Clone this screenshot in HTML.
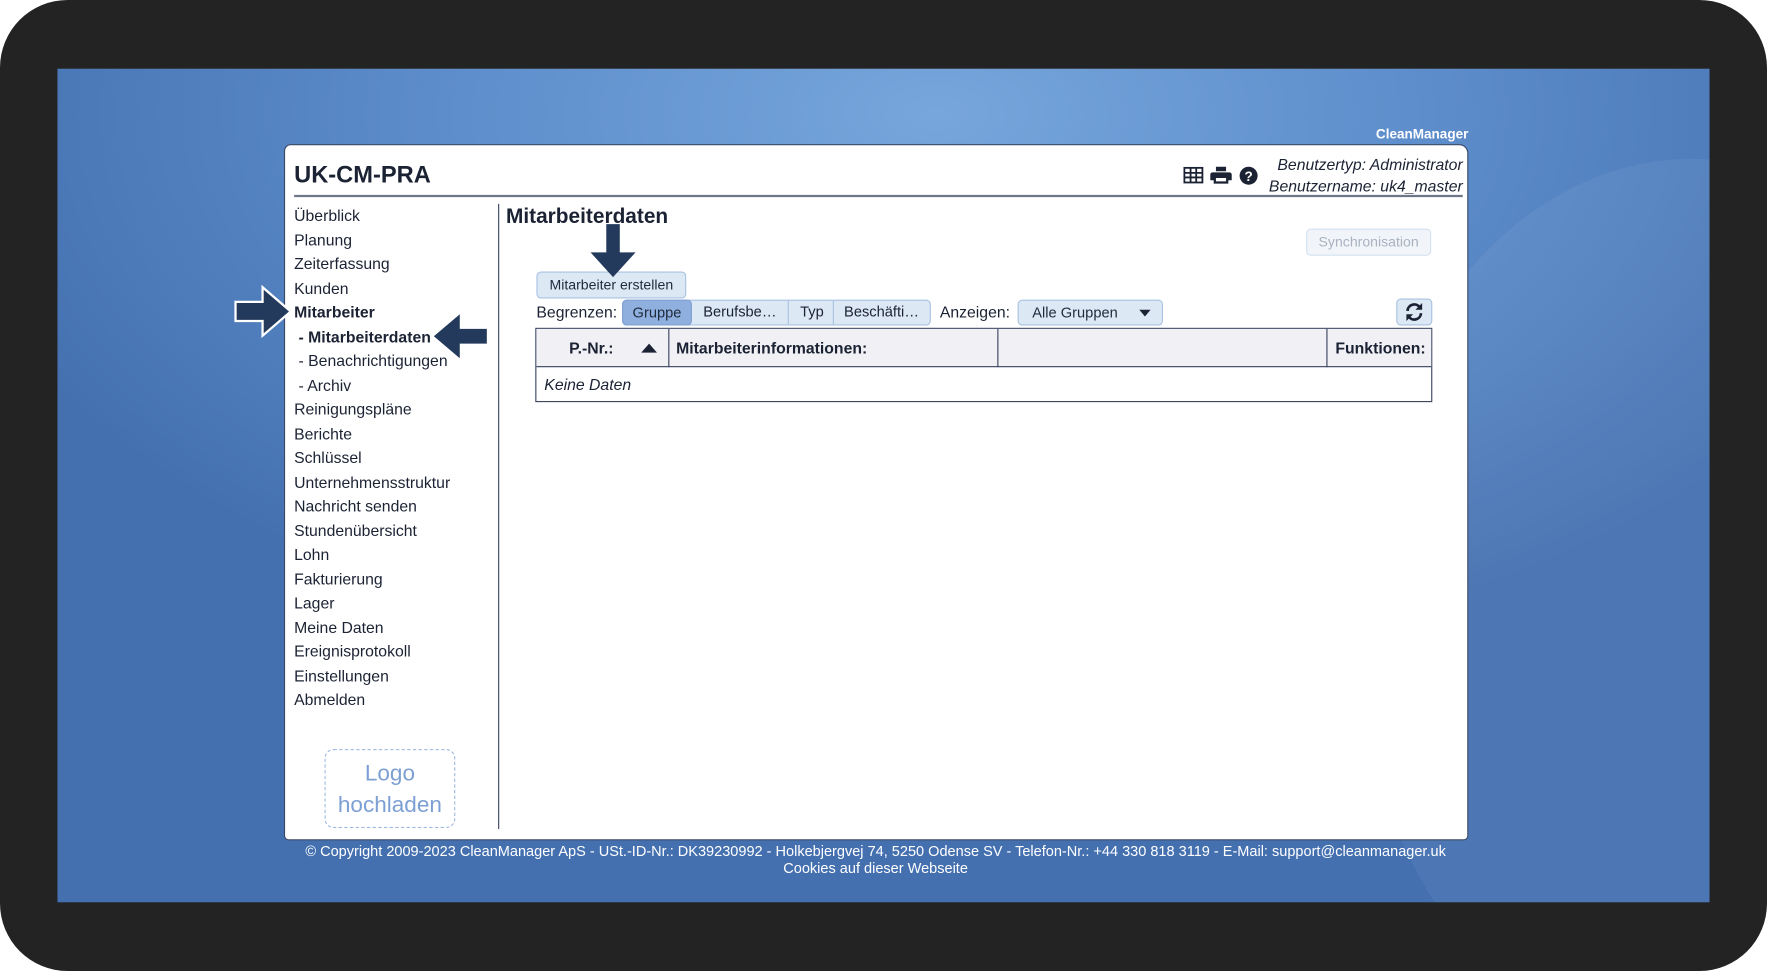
<!DOCTYPE html>
<html><head><meta charset="utf-8"><style>
*{margin:0;padding:0;box-sizing:border-box}
html,body{width:1767px;height:971px;overflow:hidden;background:#fff;font-family:"Liberation Sans",Arial,sans-serif}
#w{position:absolute;left:0;top:0;width:1568px;height:862px;transform:scale(1.12691,1.12645);transform-origin:0 0;overflow:hidden}
.frame{position:absolute;left:0;top:0;width:1568px;height:862px;background:#232323;border-radius:60px}
.scr{position:absolute;left:51px;top:61px;width:1466px;height:740px;background:radial-gradient(ellipse 900px 500px at 780px 40px,#77a6dc 0%,#5f8fcc 45%,#4470b0 100%);overflow:hidden}
.abs{position:absolute}
.panel{position:absolute;left:252px;top:128px;width:1051px;height:618px;background:#fff;border:1px solid #3a4a66;border-radius:6px 8px 4px 4px}
.nav{position:absolute;left:261px;top:181px;font-size:14px;color:#1b2233;line-height:21.5px}
.nav div{white-space:nowrap}
.btn{position:absolute;border:1px solid #a9c2e2;background:#dde8f5;border-radius:4px;font-size:12.5px;color:#1f2a3c;text-align:center}
.t{position:absolute;font-size:14px;color:#1b2233;white-space:nowrap}
.cell{position:absolute;top:0;height:34px;border-right:1px solid #3a4560;font-weight:bold;font-size:14px;color:#1b2233;line-height:34px}
</style></head><body><div id="w">
<div class="frame"></div>
<div class="scr"><div class="abs" style="left:1150px;top:80px;width:600px;height:800px;border-radius:50%;background:rgba(255,255,255,0.05)"></div></div>
<div class="abs" style="right:265px;top:112px;font-size:12px;font-weight:bold;color:#fff">CleanManager</div>
<div class="panel"></div>
<div class="abs" style="left:261px;top:144px;font-size:21px;font-weight:bold;color:#1b2233">UK-CM-PRA</div>
<div class="abs" style="left:261px;top:173px;width:1037px;height:2px;background:#6e7787"></div>
<div class="abs" style="right:270px;top:137px;text-align:right;font-style:italic;font-size:14px;line-height:19px;color:#1b2233">Benutzertyp: Administrator<br>Benutzername: uk4_master</div>
<svg class="abs" style="left:1050px;top:147px" width="70" height="18" viewBox="0 0 70 18">
<g fill="none" stroke="#1b2233" stroke-width="1.6"><rect x="1" y="2" width="16" height="13"/><path d="M1 6.5H17M1 10.5H17M6.5 2V15M11.5 2V15"/></g>
<path fill="#1b2233" d="M29 1h9v4h-9zM26 6h15a2 2 0 0 1 2 2v5h-3v3H27v-3h-3V8a2 2 0 0 1 2-2zM29 11v3h9v-3z"/>
<circle cx="58" cy="9" r="8" fill="#1b2233"/><text x="58" y="13.5" font-size="12" font-weight="bold" fill="#fff" text-anchor="middle" font-family="Liberation Sans">?</text>
</svg>
<div class="nav">
<div>Überblick</div><div>Planung</div><div>Zeiterfassung</div><div>Kunden</div><div style="font-weight:bold">Mitarbeiter</div><div style="font-weight:bold">&nbsp;- Mitarbeiterdaten</div><div>&nbsp;- Benachrichtigungen</div><div>&nbsp;- Archiv</div><div>Reinigungspläne</div><div>Berichte</div><div>Schlüssel</div><div>Unternehmensstruktur</div><div>Nachricht senden</div><div>Stundenübersicht</div><div>Lohn</div><div>Fakturierung</div><div>Lager</div><div>Meine Daten</div><div>Ereignisprotokoll</div><div>Einstellungen</div><div>Abmelden</div>
</div>
<div class="abs" style="left:442px;top:181px;width:1px;height:555px;background:#3a4560"></div>
<div class="abs" style="left:288px;top:665px;width:116px;height:70px;border:1px dashed #9db8e0;border-radius:8px;text-align:center;color:#7c9fd4;font-size:20px;line-height:28px;padding-top:7px">Logo<br>hochladen</div>
<div class="abs" style="left:449px;top:181px;font-size:18.5px;font-weight:bold;color:#1b2233">Mitarbeiterdaten</div>
<div class="btn" style="left:1159px;top:203px;width:111px;height:24px;line-height:22px;color:#a9b2c0;background:#f1f5fa;border-color:#d4e1f1">Synchronisation</div>
<div class="btn" style="left:476px;top:241px;width:133px;height:24px;line-height:22px">Mitarbeiter erstellen</div>
<div class="t" style="left:476px;top:269px">Begrenzen:</div>
<div class="btn" style="left:552px;top:266px;width:274px;height:23px;background:#dde8f5"></div>
<div class="btn" style="left:552px;top:266px;width:62px;height:23px;line-height:21px;background:#8fb0de;border-color:#7d9fd1;font-size:13px">Gruppe</div>
<div class="t" style="left:624px;top:269px;font-size:13px">Berufsbe…</div>
<div class="abs" style="left:699px;top:267px;width:1px;height:21px;background:#a9c2e2"></div>
<div class="t" style="left:710px;top:269px;font-size:13px">Typ</div>
<div class="abs" style="left:739px;top:267px;width:1px;height:21px;background:#a9c2e2"></div>
<div class="t" style="left:749px;top:269px;font-size:13px">Beschäfti…</div>
<div class="t" style="left:834px;top:269px">Anzeigen:</div>
<div class="btn" style="left:903px;top:266px;width:129px;height:23px;line-height:21px;text-align:left;padding-left:12px;font-size:13px">Alle Gruppen<span style="position:absolute;right:10px;top:8px;border:5px solid transparent;border-top:6px solid #1b2233;border-bottom:0"></span></div>
<div class="btn" style="left:1239px;top:265px;width:32px;height:24px"><svg width="18" height="18" viewBox="0 0 18 18" style="margin-top:2px"><g fill="none" stroke="#1b2233" stroke-width="2.4"><path d="M3 8a6 6 0 0 1 11-3"/><path d="M15 10a6 6 0 0 1-11 3"/></g><path fill="#1b2233" d="M16 1v6h-6zM2 17v-6h6z"/></svg></div>
<div class="abs" style="left:475px;top:291px;width:796px;height:66px;border:1px solid #3a4560">
<div class="abs" style="left:0;top:0;width:794px;height:34px;background:#f0f0f5;border-bottom:1px solid #3a4560"></div>
<div class="cell" style="left:0;width:118px;padding-left:29px">P.-Nr.:<span style="position:absolute;left:93px;top:13px;border:7px solid transparent;border-bottom:8px solid #1b2233;border-top:0"></span></div>
<div class="cell" style="left:118px;width:292px;padding-left:6px">Mitarbeiterinformationen:</div>
<div class="cell" style="left:410px;width:292px"></div>
<div class="cell" style="left:702px;width:92px;border-right:0;padding-left:7px">Funktionen:</div>
<div class="abs" style="left:7px;top:41px;font-style:italic;font-size:14px;color:#1b2233">Keine Daten</div>
</div>
<svg class="abs" style="left:0;top:0" width="1568" height="862">
<g fill="#243a5c">
<path d="M209 268h24v-13l25 21.5-25 21.5v-13h-24z" stroke="#fff" stroke-width="2"/>
<path d="M432 292h-24v-13l-23 19.5 23 19.5v-13h24z"/>
<path d="M538 199h12v25h14l-20 22-20-22h14z"/>
</g></svg>
<div class="abs" style="left:0;width:1554px;top:748px;text-align:center;color:#fff;font-size:12.9px;line-height:15px">© Copyright 2009-2023 CleanManager ApS - USt.-ID-Nr.: DK39230992 - Holkebjergvej 74, 5250 Odense SV - Telefon-Nr.: +44 330 818 3119 - E-Mail: support@cleanmanager.uk<br>Cookies auf dieser Webseite</div>
</div></body></html>
